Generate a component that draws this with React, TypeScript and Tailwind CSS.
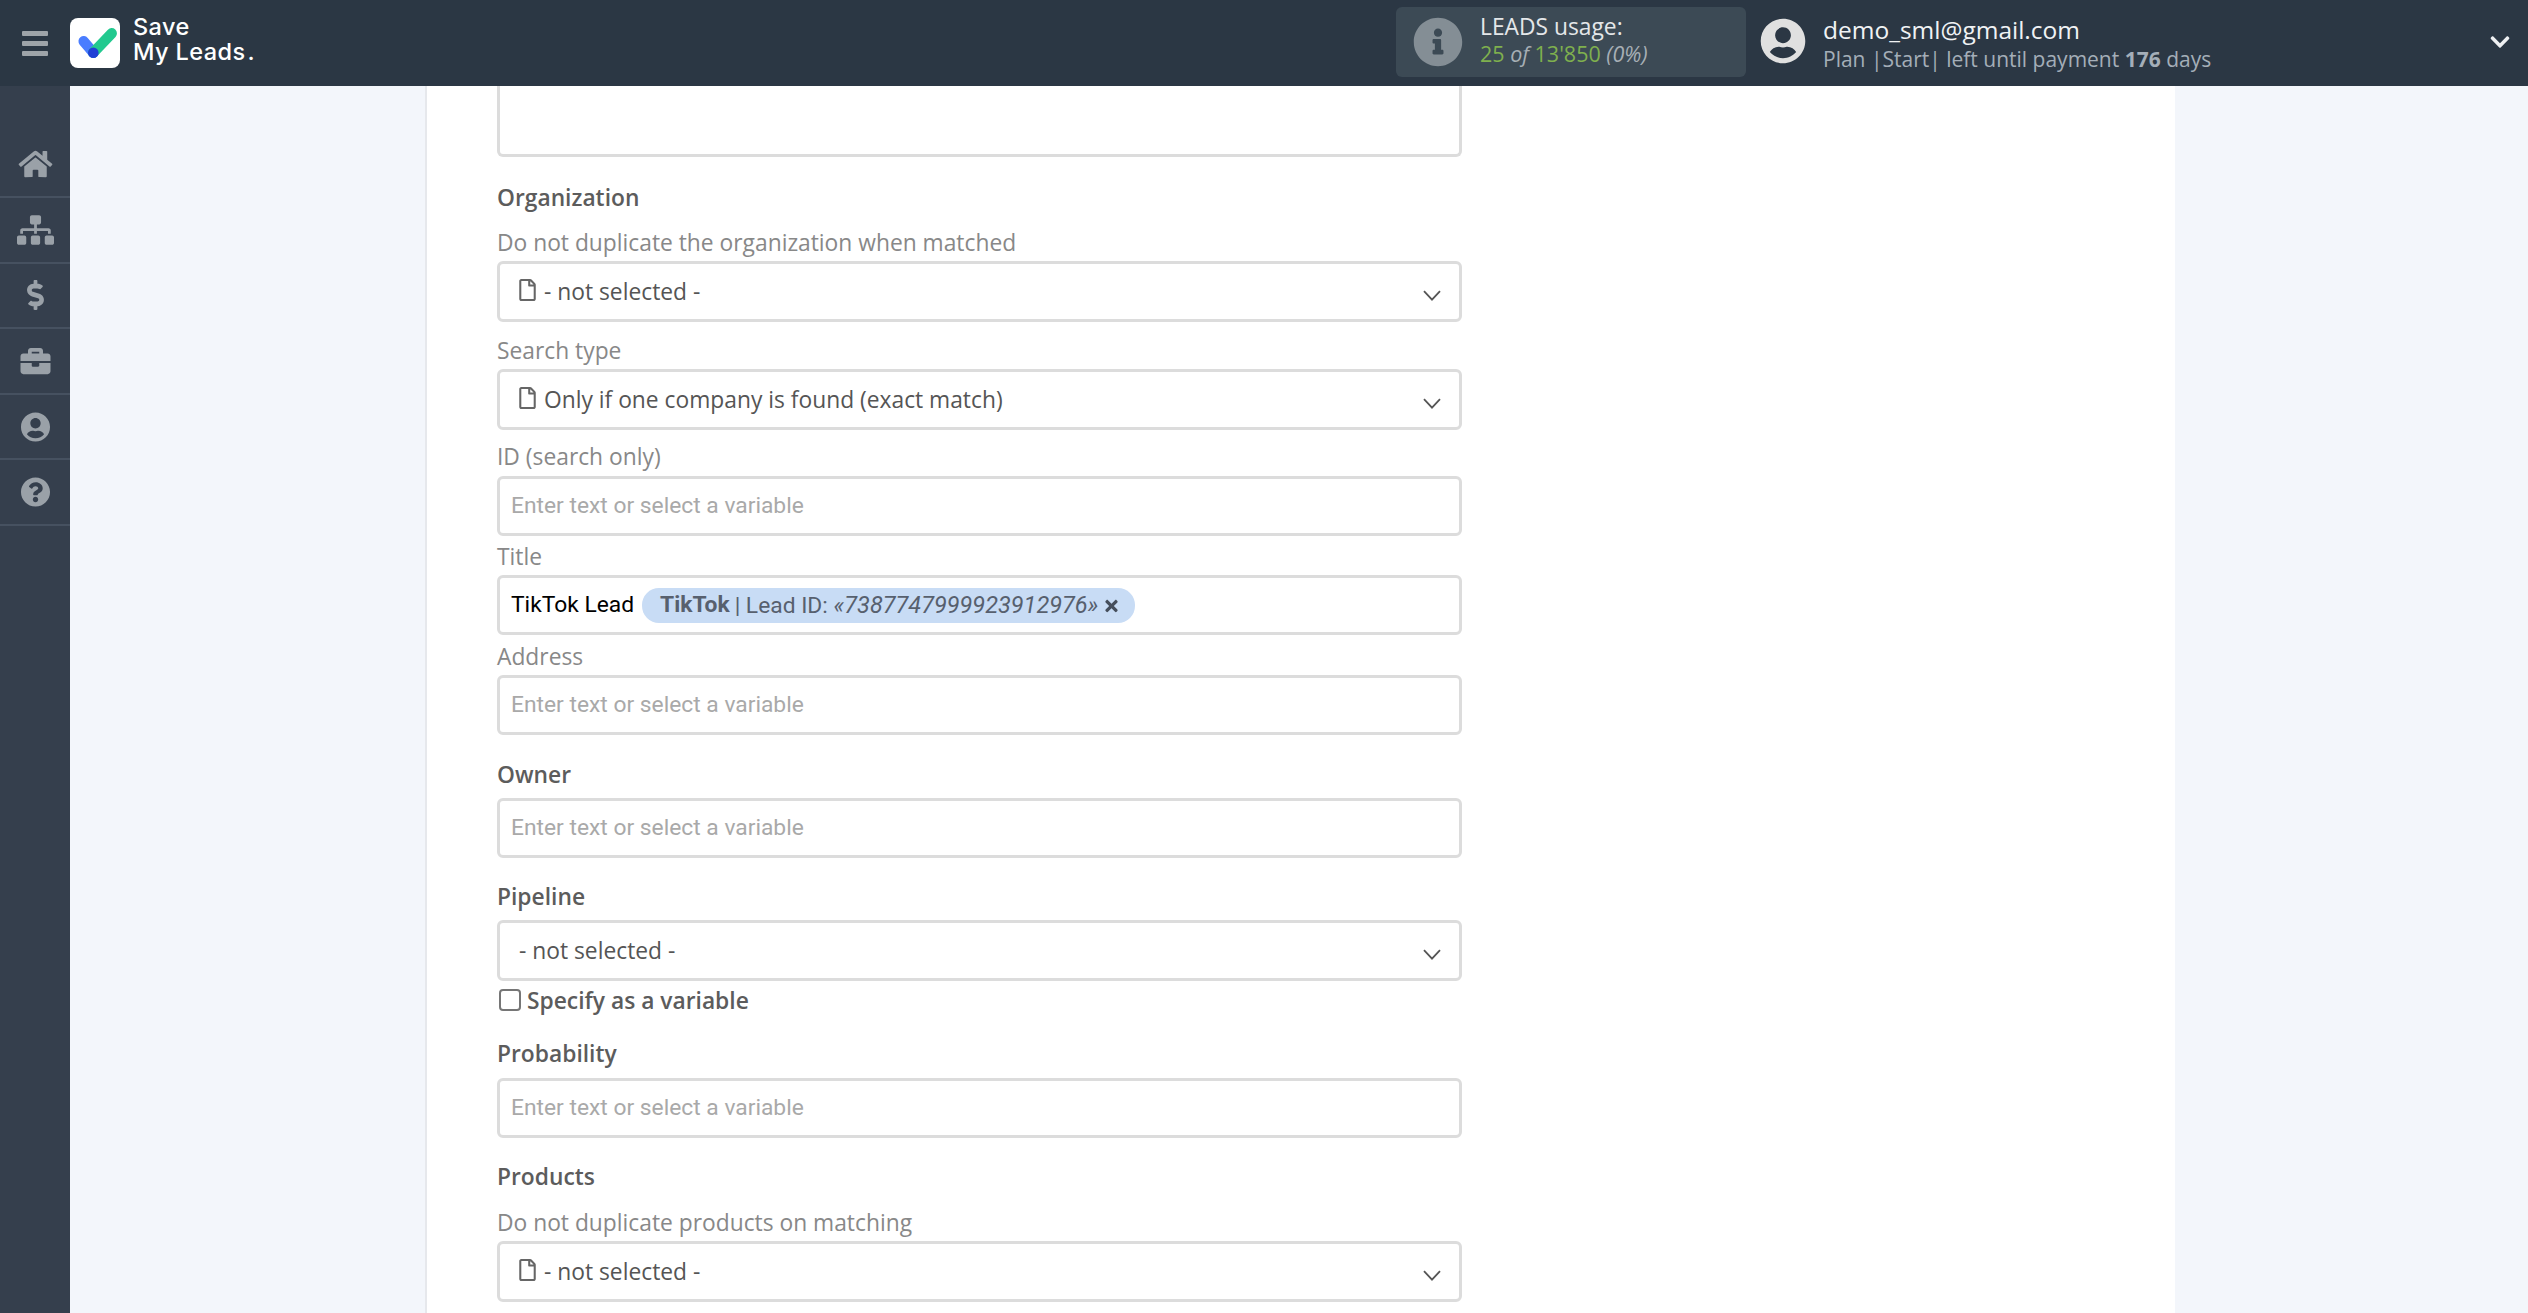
import { FaBriefcase, FaChevronDown, FaDollarSign, FaHome, FaInfoCircle, FaQuestionCircle, FaRegFile, FaSitemap, FaTimes, FaUserCircle } from 'react-icons/fa'

const sideItems = [FaHome, FaSitemap, FaDollarSign, FaBriefcase, FaUserCircle, FaQuestionCircle]

function Logo() {
  return (
    <svg viewBox="0 0 50 50" className="h-[50px] w-[50px] shrink-0">
      <rect width="50" height="50" rx="8" fill="#fff" />
      <path d="M13.7 23.3 23.3 34.7" stroke="#4a7dff" strokeWidth="10.5" strokeLinecap="round" fill="none" />
      <path d="M23.3 34.7 41.7 15.3" stroke="#22c98f" strokeWidth="10.5" strokeLinecap="round" fill="none" />
      <circle cx="23.3" cy="34.7" r="5.3" fill="#1f3fd6" />
    </svg>
  )
}

function Label({ children, className }: { children: string; className: string }) {
  return <div className={`h-8 leading-8 ${className}`}>{children}</div>
}

// bold section heading vs. the lighter grey field caption
const heading = 'text-[22.8px] font-semibold text-[#5c5c5c]'
const caption = 'text-[22.8px] text-[#888]'

function Chevron() {
  return (
    <svg viewBox="0 0 18 11" className="ml-auto mt-[7px] h-[11px] w-[18px] shrink-0">
      <path d="M1 1.2 9 9.6 17 1.2" stroke="#555" strokeWidth="1.8" fill="none" />
    </svg>
  )
}

function SelectBox({ text, file = false }: { text: string; file?: boolean }) {
  return (
    <div className="flex h-[61px] w-[965px] items-center rounded-[6px] border-[3px] border-[#dcdcdc] bg-white pl-[19px] pr-[18px] font-['Open_Sans'] text-[22.8px] text-[#555]">
      {file && <FaRegFile className="mr-[8px] mt-[-4px] h-[22px] w-[17px] shrink-0 text-[#666]" />}
      <span className="pt-[1px]">{text}</span>
      <Chevron />
    </div>
  )
}

function InputBox({ className }: { className: string }) {
  return (
    <div className={`flex h-[60px] w-[965px] items-center rounded-[6px] border-[3px] border-[#dcdcdc] bg-white pl-[11px] pt-[1px] font-['Roboto'] text-[22.8px] text-[#a9a9a9] ${className}`}>
      Enter text or select a variable
    </div>
  )
}

export default function App() {
  return (
    <div className="flex h-screen flex-col overflow-hidden bg-[#f3f6fb] font-['Open_Sans',sans-serif]">
      <header className="flex h-[86px] shrink-0 items-center bg-[#2b3744]">
        <div className="ml-[22px] flex w-[26px] flex-col gap-[5px]">
          <span className="h-[5px] rounded-[1px] bg-[#9ea4a9]" />
          <span className="h-[5px] rounded-[1px] bg-[#9ea4a9]" />
          <span className="h-[5px] rounded-[1px] bg-[#9ea4a9]" />
        </div>
        <div className="ml-[22px] flex items-center">
          <Logo />
          <div className="ml-[13px] -mt-[9px] w-[130px] font-['Inter'] text-[23.5px] font-medium leading-[25px] tracking-[0.4px] text-white">
            <div>Save</div>
            <div>My Leads<span className="ml-[2px]">.</span></div>
          </div>
        </div>
        <div className="ml-[1133px] -mt-[2px] flex h-[70px] w-[350px] items-center rounded-[6px] bg-[#3c4a55] pl-[17px]">
          <FaInfoCircle className="h-[50px] w-[50px] text-[#848e95]" />
          <div className="ml-[17px] -mt-[5px] text-[22.8px] leading-[27px]">
            <div className="text-[#e4e7e9]">LEADS usage:</div>
            <div className="text-[21.5px] text-[#7fb04e]">
              25 <i className="text-[#a7afb5]">of</i> 13'850 <i className="text-[#a7afb5]">(0%)</i>
            </div>
          </div>
        </div>
        <FaUserCircle className="ml-[14px] -mt-[5px] h-[46px] w-[46px] text-[#e0e0e0]" />
        <div className="ml-[17px]">
          <div className="text-[24.5px] leading-[32px] text-[#f0f2f4]">demo_sml@gmail.com</div>
          <div className="text-[21px] leading-[27px] text-[#a4aeb8]">
            Plan |Start| left until payment <b className="font-bold">176</b> days
          </div>
        </div>
        <FaChevronDown className="ml-auto mr-[16px] -mt-[2px] h-[22px] w-[24px] text-[#eef0f2]" />
      </header>

      <div className="flex min-h-0 flex-1">
        <aside className="w-[70px] shrink-0 bg-[#353f4d] pt-[46.5px]">
          {sideItems.map((Icon, i) => (
            <div key={i} className="flex h-[65.6px] items-center justify-center border-b-2 border-[#465160]">
              <Icon className="h-[30px] w-[37px] text-[#9aa1a8]" />
            </div>
          ))}
        </aside>

        <main className="min-w-0 flex-1 overflow-hidden pl-[355px]">
          <div className="h-full w-[1750px] border-l-2 border-[#e6e8ec] bg-white pl-[70px]">
            <div className="h-[71px] w-[965px] rounded-b-[6px] border-[3px] border-t-0 border-[#dcdcdc]" />

            <Label className={`mt-[25px] ${heading}`}>Organization</Label>
            <Label className={`mt-[13px] ${caption}`}>Do not duplicate the organization when matched</Label>
            <div className="mt-[2px]"><SelectBox file text="- not selected -" /></div>

            <Label className={`mt-[13px] ${caption}`}>Search type</Label>
            <div className="mt-[2px]"><SelectBox file text="Only if one company is found (exact match)" /></div>

            <Label className={`mt-[11px] ${caption}`}>ID (search only)</Label>
            <InputBox className="mt-[3px]" />

            <Label className={`mt-[5px] ${caption}`}>Title</Label>
            <div className="mt-[2px] flex h-[60px] w-[965px] items-center rounded-[6px] border-[3px] border-[#dcdcdc] bg-white pl-[11px] font-['Roboto'] text-[22.8px]">
              <span className="pt-[1px] text-black">TikTok Lead</span>
              <span className="ml-[8px] flex h-[35px] w-[493px] items-center rounded-[17px] bg-[#c8dcf5] pl-[18px] pt-[1px] text-[#57606e]">
                <b className="font-bold">TikTok</b>
                <span className="ml-[5px]">| Lead ID: <i className="text-[23.5px]">«7387747999923912976»</i></span>
                <FaTimes className="ml-[5px] h-[18px] w-[17px] text-[#454e5c]" />
              </span>
            </div>

            <Label className={`mt-[6px] ${caption}`}>Address</Label>
            <InputBox className="mt-[2px]" />

            <Label className={`mt-[24px] ${heading}`}>Owner</Label>
            <InputBox className="mt-[7px] h-[59px]" />

            <Label className={`mt-[23px] ${heading}`}>Pipeline</Label>
            <div className="mt-[7px]"><SelectBox text="- not selected -" /></div>

            <div className={`mt-[4px] flex h-8 items-center ${heading}`}>
              <span className="ml-[2px] -mt-[2px] h-[22px] w-[22px] rounded-[4px] border-2 border-[#767676] bg-white" />
              <span className="ml-[6px]">Specify as a variable</span>
            </div>

            <Label className={`mt-[21px] ${heading}`}>Probability</Label>
            <InputBox className="mt-[8px] h-[59px]" />

            <Label className={`mt-[23px] ${heading}`}>Products</Label>
            <Label className={`mt-[14px] ${caption}`}>Do not duplicate products on matching</Label>
            <div className="mt-[2px]"><SelectBox file text="- not selected -" /></div>
          </div>
        </main>
      </div>
    </div>
  )
}
